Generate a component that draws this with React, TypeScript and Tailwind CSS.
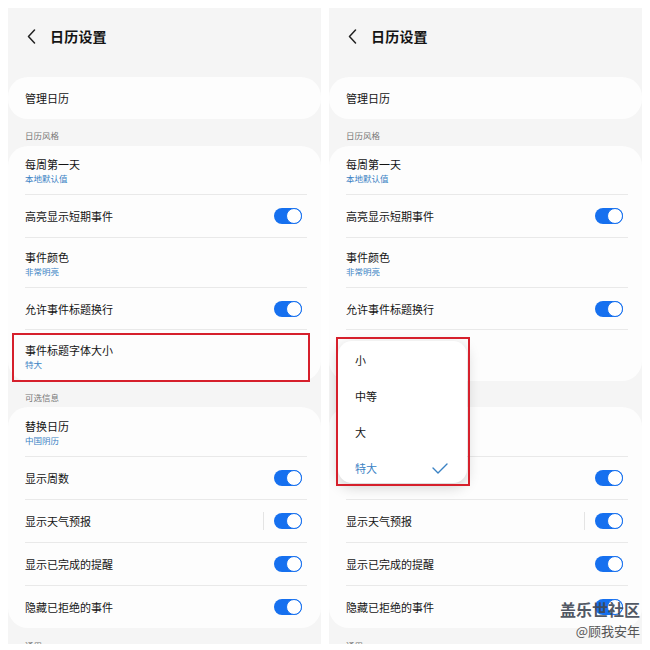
import React from "react";

const FONT = { fontFamily: '"Noto Sans CJK SC", "Noto Sans", sans-serif' };

const Toggle = ({ sep = false }: { sep?: boolean }) => (
  <div className="flex items-center">
    {sep && <div className="w-px h-[18px] bg-[#e4e4e4] mr-[10px]" />}
    <div className="w-[28px] h-[16px] rounded-full bg-[#1670ef] flex items-center justify-end">
      <div className="w-[16px] h-[16px] rounded-full bg-white border-[1.5px] border-[#1670ef]" />
    </div>
  </div>
);

type RowProps = {
  title: string;
  sub?: string;
  toggle?: boolean;
  sep?: boolean;
  hClass: string;
  last?: boolean;
  hidden?: boolean;
};

const Row = ({ title, sub, toggle, sep, hClass, last, hidden }: RowProps) => (
  <div
    className={`${hClass} ml-[17px] mr-[14px] flex items-center justify-between ${
      last ? "" : "border-b border-[#e9e9e9]"
    }`}
  >
    <div className={`flex flex-col ${hidden ? "invisible" : ""}`}>
      <div className="text-[11px] leading-[16px] text-[#141414]">{title}</div>
      {sub && <div className="text-[8.5px] leading-[12px] text-[#3a82c4]">{sub}</div>}
    </div>
    {toggle && (
      <div className="mr-[5px]">
        <Toggle sep={sep} />
      </div>
    )}
  </div>
);

const SectionLabel = ({ text, hClass, hidden }: { text: string; hClass: string; hidden?: boolean }) => (
  <div className={`${hClass} flex items-center pl-[17px] text-[8.5px] text-[#777777]`}>
    <span className={hidden ? "invisible" : ""}>{text}</span>
  </div>
);

const Panel = ({ children, covered = false }: { children?: React.ReactNode; covered?: boolean }) => (
  <div className="relative w-[313px] h-[636px] bg-[#f5f5f5] overflow-hidden flex flex-col">
    <div className="h-[56px] flex items-center pl-[19px] shrink-0">
      <svg width="9" height="15" viewBox="0 0 9 15" className="mr-[14px]">
        <path d="M7.5 1 L1.5 7.5 L7.5 14" fill="none" stroke="#222" strokeWidth="1.5" strokeLinecap="round" strokeLinejoin="round" />
      </svg>
      <div className="text-[14px] font-bold text-[#141414] tracking-[0.2px]">日历设置</div>
    </div>
    <div className="mt-[13px] h-[42px] shrink-0 rounded-[20px] bg-[#fdfdfd] flex items-center pl-[17px] text-[11px] text-[#141414]">
      管理日历
    </div>
    <SectionLabel text="日历风格" hClass="h-[27px] pt-[5px] shrink-0" />
    <div className="shrink-0 rounded-[20px] bg-[#fdfdfd] flex flex-col">
      <Row title="每周第一天" sub="本地默认值" hClass="h-[49px]" />
      <Row title="高亮显示短期事件" toggle hClass="h-[43px]" />
      <Row title="事件颜色" sub="非常明亮" hClass="h-[50px]" />
      <Row title="允许事件标题换行" toggle hClass="h-[42px]" />
      <Row title="事件标题字体大小" sub="特大" hClass="h-[51px]" last hidden={covered} />
    </div>
    <SectionLabel text="可选信息" hClass="h-[26px] pt-[6px] shrink-0" hidden={covered} />
    <div className="shrink-0 rounded-[20px] bg-[#fdfdfd] flex flex-col">
      <Row title="替换日历" sub="中国阴历" hClass="h-[50px]" hidden={covered} />
      <Row title="显示周数" toggle hClass="h-[43px]" hidden={covered} />
      <Row title="显示天气预报" toggle sep hClass="h-[43px]" />
      <Row title="显示已完成的提醒" toggle hClass="h-[43px]" />
      <Row title="隐藏已拒绝的事件" toggle hClass="h-[42px]" last />
    </div>
    <SectionLabel text="通用" hClass="h-[26px] pt-[8px] shrink-0" />
    {children}
  </div>
);

export default function App() {
  return (
    <div className="relative w-[650px] h-[650px] bg-white flex gap-[8px] p-[8px]" style={FONT}>
      <Panel>
        <div className="absolute left-[4px] top-[325px] w-[298px] h-[49px] border-2 border-[#d6202c]" />
      </Panel>
      <Panel covered>
        <div className="absolute left-[9px] top-[333px] w-[129px] h-[142px] rounded-[14px] bg-white shadow-[0_4px_14px_rgba(0,0,0,0.18)] overflow-hidden flex flex-col pt-[1px]">
          <div className="h-[36px] shrink-0 flex items-center pl-[17px] text-[11px] text-[#141414]">小</div>
          <div className="h-[36px] shrink-0 flex items-center pl-[17px] text-[11px] text-[#141414]">中等</div>
          <div className="h-[36px] shrink-0 flex items-center pl-[17px] text-[11px] text-[#141414]">大</div>
          <div className="h-[36px] shrink-0 flex items-center justify-between pl-[17px] pr-[19px] text-[11px] text-[#3a82c4]">
            <span>特大</span>
            <svg width="16" height="11" viewBox="0 0 16 11">
              <path d="M1 5 L6 10 L15 1" fill="none" stroke="#3a82c4" strokeWidth="1.4" strokeLinecap="round" strokeLinejoin="round" />
            </svg>
          </div>
        </div>
        <div className="absolute left-[7px] top-[329px] w-[134px] h-[149px] border-2 border-[#d6202c]" />
      </Panel>
      <div className="absolute right-[10px] top-[599px] flex flex-col items-end">
        <div className="text-[16px] leading-[20px] font-semibold text-[#3f4754] opacity-90">盖乐世社区</div>
        <div className="mt-[3px] text-[13px] leading-[18px] text-[#555555]">@顾我安年</div>
      </div>
    </div>
  );
}
